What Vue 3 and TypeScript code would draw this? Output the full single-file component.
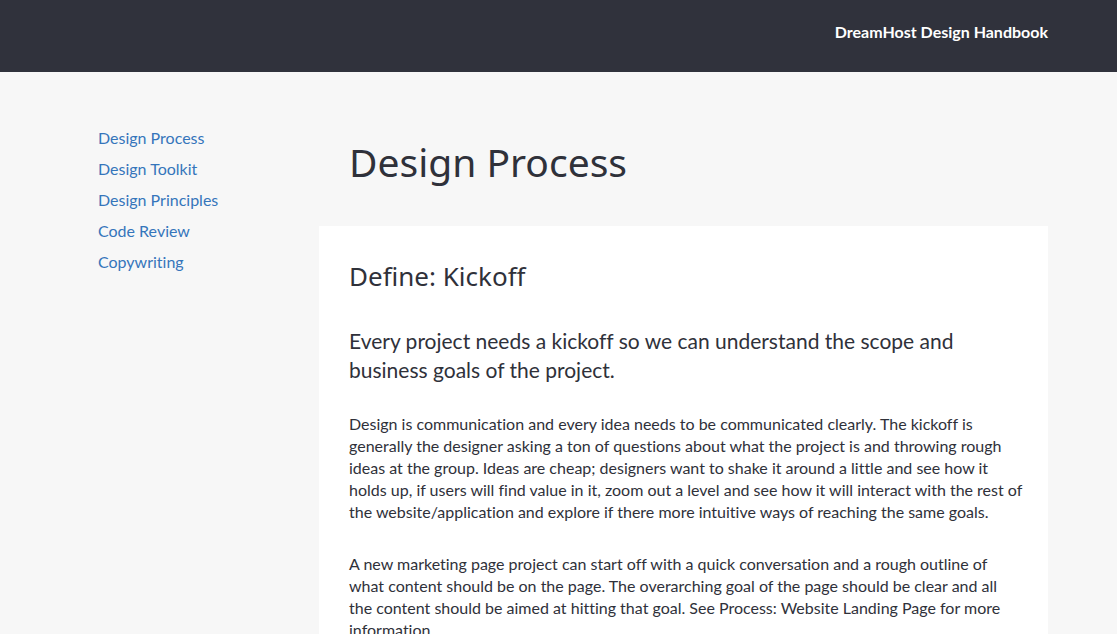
<script setup lang="ts">
interface NavLink {
  label: string
  slug: string
}

const links: NavLink[] = [
  { label: 'Design Process', slug: 'design-process' },
  { label: 'Design Toolkit', slug: 'design-toolkit' },
  { label: 'Design Principles', slug: 'design-principles' },
  { label: 'Code Review', slug: 'code-review' },
  { label: 'Copywriting', slug: 'copywriting' },
]

const paragraphs: string[][] = [
  [
    'Design is communication and every idea needs to be communicated clearly. The kickoff is',
    'generally the designer asking a ton of questions about what the project is and throwing rough',
    'ideas at the group. Ideas are cheap; designers want to shake it around a little and see how it',
    'holds up, if users will find value in it, zoom out a level and see how it will interact with the rest of',
    'the website/application and explore if there more intuitive ways of reaching the same goals.',
  ],
  [
    'A new marketing page project can start off with a quick conversation and a rough outline of',
    'what content should be on the page. The overarching goal of the page should be clear and all',
    'the content should be aimed at hitting that goal. See Process: Website Landing Page for more',
    'information.',
  ],
]
</script>

<template>
  <div class="page">
    <header class="topbar">
      <a class="brand" href="#">DreamHost Design Handbook</a>
    </header>
    <div class="layout">
      <nav class="sidebar" aria-label="Handbook">
        <ul>
          <li v-for="link in links" :key="link.slug">
            <a :href="`#${link.slug}`">{{ link.label }}</a>
          </li>
        </ul>
      </nav>
      <main class="content">
        <h1>Design Process</h1>
        <article class="card">
          <h2>Define: Kickoff</h2>
          <p class="lead">
            Every project needs a kickoff so we can understand the scope and<br />
            business goals of the project.
          </p>
          <p v-for="(lines, i) in paragraphs" :key="i" class="body">
            <template v-for="(line, j) in lines" :key="j">{{ line }}<br v-if="j < lines.length - 1" /></template>
          </p>
        </article>
      </main>
    </div>
  </div>
</template>

<style>
html,
body {
  background: #f7f7f7;
}

body {
  margin: 0;
}
</style>

<style scoped>
.page {
  color: #2f313a;
  font-family: Lato, 'Open Sans', sans-serif;
  font-variant-ligatures: none;
}

.topbar {
  display: flex;
  justify-content: flex-end;
  box-sizing: border-box;
  height: 72px;
  padding: 21px 69px 0;
  background: #30323c;
}

.brand {
  color: #fff;
  font-size: 16px;
  font-weight: 700;
  line-height: 22px;
  text-decoration: none;
}

.layout {
  display: flex;
  gap: 30px;
  padding: 0 69px;
}

.sidebar {
  flex: 0 0 220px;
  box-sizing: border-box;
  padding: 55px 0 0 29px;
}

.sidebar ul {
  display: flex;
  flex-direction: column;
  gap: 9px;
  margin: 0;
  padding: 0;
  list-style: none;
}

.sidebar li {
  line-height: 22px;
}

.sidebar a {
  color: #3575bb;
  font-size: 16px;
  text-decoration: none;
}

.content {
  flex: 1;
  min-width: 0;
}

h1,
h2,
p {
  margin: 0;
}

h1,
h2 {
  font-family: 'Noto Sans', sans-serif;
  font-weight: 400;
}

h1 {
  padding: 62px 30px 36px;
  font-size: 39px;
  line-height: 56px;
}

.card {
  padding: 31px 30px;
  background: #fff;
}

h2 {
  margin-bottom: 31px;
  font-size: 26px;
  line-height: 38px;
}

p {
  white-space: nowrap;
}

.lead {
  margin-bottom: 29px;
  font-size: 21px;
  line-height: 29px;
}

.body {
  margin-bottom: 30px;
  font-size: 16px;
  line-height: 22px;
}
</style>
